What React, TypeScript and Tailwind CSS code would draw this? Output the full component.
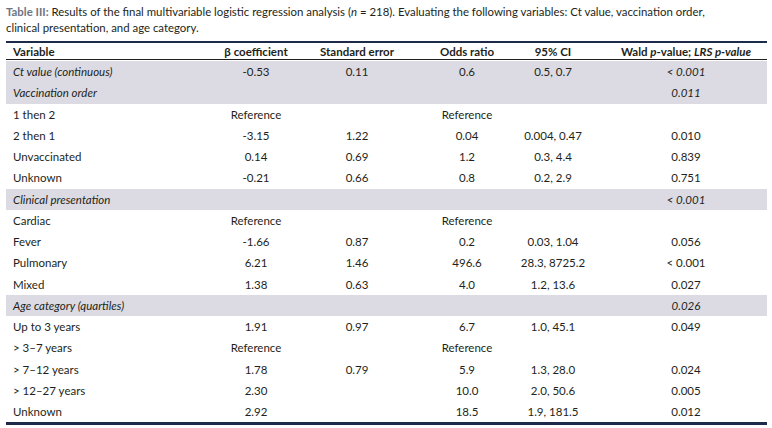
import React from "react";

type Row = {
  kind: "group" | "row";
  label: string;
  b?: string;
  se?: string;
  or?: string;
  ci?: string;
  p?: string;
  refRow?: boolean;
};

const rows: Row[] = [
  { kind: "group", label: "Ct value (continuous)", b: "-0.53", se: "0.11", or: "0.6", ci: "0.5, 0.7", p: "< 0.001" },
  { kind: "group", label: "Vaccination order", p: "0.011" },
  { kind: "row", label: "1 then 2", refRow: true },
  { kind: "row", label: "2 then 1", b: "-3.15", se: "1.22", or: "0.04", ci: "0.004, 0.47", p: "0.010" },
  { kind: "row", label: "Unvaccinated", b: "0.14", se: "0.69", or: "1.2", ci: "0.3, 4.4", p: "0.839" },
  { kind: "row", label: "Unknown", b: "-0.21", se: "0.66", or: "0.8", ci: "0.2, 2.9", p: "0.751" },
  { kind: "group", label: "Clinical presentation", p: "< 0.001" },
  { kind: "row", label: "Cardiac", refRow: true },
  { kind: "row", label: "Fever", b: "-1.66", se: "0.87", or: "0.2", ci: "0.03, 1.04", p: "0.056" },
  { kind: "row", label: "Pulmonary", b: "6.21", se: "1.46", or: "496.6", ci: "28.3, 8725.2", p: "< 0.001" },
  { kind: "row", label: "Mixed", b: "1.38", se: "0.63", or: "4.0", ci: "1.2, 13.6", p: "0.027" },
  { kind: "group", label: "Age category (quartiles)", p: "0.026" },
  { kind: "row", label: "Up to 3 years", b: "1.91", se: "0.97", or: "6.7", ci: "1.0, 45.1", p: "0.049" },
  { kind: "row", label: "> 3–7 years", refRow: true },
  { kind: "row", label: "> 7–12 years", b: "1.78", se: "0.79", or: "5.9", ci: "1.3, 28.0", p: "0.024" },
  { kind: "row", label: "> 12–27 years", b: "2.30", or: "10.0", ci: "2.0, 50.6", p: "0.005" },
  { kind: "row", label: "Unknown", b: "2.92", or: "18.5", ci: "1.9, 181.5", p: "0.012" },
];

const grid = "grid grid-cols-[206px_88px_114px_106px_66px_181px] items-center";

export default function App() {
  return (
    <div
      className="w-[772px] h-[428px] bg-white text-[#231f20] overflow-hidden"
      style={{ fontFamily: "Lato, 'Open Sans', sans-serif" }}
    >
      <div className="pl-[6px] pt-[4px] text-[11.4px] leading-[16px]">
        <span className="font-bold text-[#6e7482]">Table III:</span> Results of the final multivariable logistic
        regression analysis (<i>n</i> = 218). Evaluating the following variables: Ct value, vaccination order,
        <br />
        clinical presentation, and age category.
      </div>
      <div className="ml-[6px] mt-[5px] w-[761px]">
        <div className="border-t-2 border-[#1e2a4a]" />
        <div className={`${grid} h-[17px] font-bold text-[11.5px] border-b border-[#231f20]`}>
          <div className="pl-[7px]">Variable</div>
          <div className="text-center whitespace-nowrap">β coefficient</div>
          <div className="text-center whitespace-nowrap">Standard error</div>
          <div className="text-center whitespace-nowrap">Odds ratio</div>
          <div className="text-center whitespace-nowrap">95% CI</div>
          <div className="text-center whitespace-nowrap pl-[19px]">
            Wald <i>p</i>-value; <i>LRS p-value</i>
          </div>
        </div>
        <div className="pt-[1px]">
          {rows.map((r, i) => {
            const g = r.kind === "group";
            return (
              <div
                key={i}
                className={`${grid} h-[21.25px] text-[11.5px] ${g ? "bg-[#dcdbe3]" : "bg-white"}`}
              >
                <div className={`pl-[7px] whitespace-nowrap ${g ? "italic" : ""}`}>{r.label}</div>
                {r.refRow ? (
                  <>
                    <div className="text-center">Reference</div>
                    <div />
                    <div className="text-center">Reference</div>
                    <div />
                    <div />
                  </>
                ) : (
                  <>
                    <div className="text-center whitespace-nowrap">{r.b ?? ""}</div>
                    <div className="text-center whitespace-nowrap">{r.se ?? ""}</div>
                    <div className="text-center whitespace-nowrap">{r.or ?? ""}</div>
                    <div className="text-center whitespace-nowrap">{r.ci ?? ""}</div>
                    <div className={`text-center whitespace-nowrap pl-[19px] ${g ? "italic" : ""}`}>{r.p ?? ""}</div>
                  </>
                )}
              </div>
            );
          })}
        </div>
        <div className="border-t-[3px] border-[#1e2a4a]" />
      </div>
    </div>
  );
}
